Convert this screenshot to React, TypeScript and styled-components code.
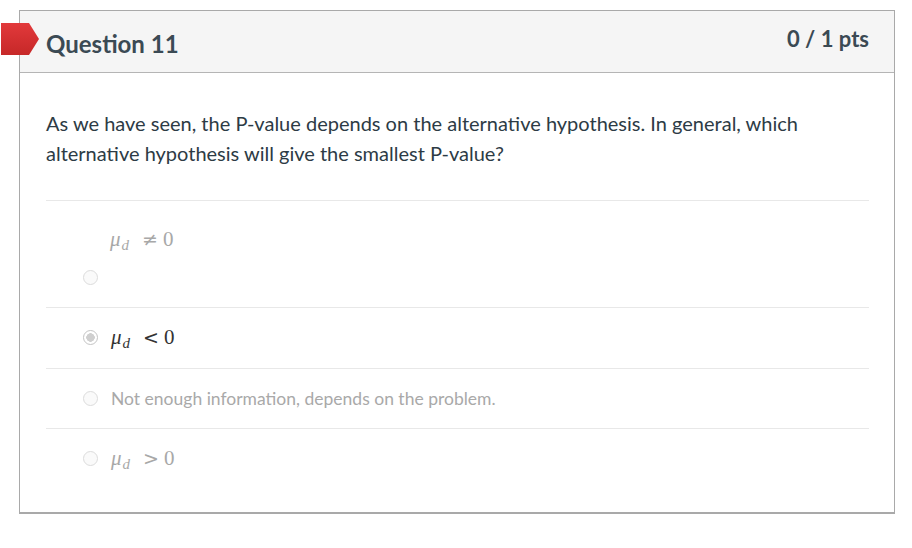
import React from "react";
import styled, { createGlobalStyle } from "styled-components";

const Global = createGlobalStyle`
  html, body { margin: 0; padding: 0; background: #fff; }
  body { font-family: Lato, "Noto Sans", sans-serif; color: #2d3b45; }
`;

const Page = styled.div`
  padding: 10px 17px 0 19px;
`;

const Card = styled.div`
  position: relative;
  border: 1px solid #a9a9a9;
  border-bottom-width: 2px;
  background: #fff;
  height: 504px;
  box-sizing: border-box;
`;

const Flag = styled.div`
  position: absolute;
  left: -19px;
  top: 12px;
  width: 38px;
  height: 32px;
  background: linear-gradient(#e2393b, #c62828);
  clip-path: polygon(0 0, 28px 0, 38px 50%, 28px 100%, 0 100%);
`;

const Header = styled.div`
  display: flex;
  justify-content: space-between;
  align-items: flex-start;
  height: 62px;
  box-sizing: border-box;
  background: #f5f5f5;
  border-bottom: 1px solid #b5b5b5;
  padding: 16px 25px 0 26px;
`;

const Title = styled.h2`
  margin: 0;
  font-family: Lato, sans-serif;
  font-weight: 700;
  font-size: 24px;
  line-height: 34px;
  color: #3b4a54;
`;

const Points = styled.div`
  font-family: Lato, sans-serif;
  font-weight: 700;
  font-size: 22px;
  line-height: 24px;
  color: #3b4a54;
  margin-top: 0;
`;

const Body = styled.div`
  padding: 35px 25px 0 26px;
`;

const Question = styled.p`
  margin: 0 0 32px;
  font-size: 20px;
  line-height: 30px;
  color: #2d3b45;
`;

const Answer = styled.div<{ $stacked?: boolean }>`
  border-top: 1px solid #e8e8e8;
  display: flex;
  flex-direction: ${(p) => (p.$stacked ? "column" : "row")};
  align-items: ${(p) => (p.$stacked ? "flex-start" : "center")};
  gap: ${(p) => (p.$stacked ? "17px" : "13px")};
  padding: ${(p) => (p.$stacked ? "26px 0 22px 37px" : "0 0 0 37px")};
  height: ${(p) => (p.$stacked ? "auto" : "60.5px")};
  box-sizing: border-box;
`;

const Radio = styled.span<{ $checked?: boolean }>`
  width: 15px;
  height: 15px;
  flex: none;
  border-radius: 50%;
  box-sizing: border-box;
  border: 1px solid ${(p) => (p.$checked ? "#c4c4c4" : "#dcdcdc")};
  background: ${(p) =>
    p.$checked ? "radial-gradient(circle, #cfcfcf 0 4px, #fff 4.5px)" : "#fafafa"};
`;

const Math = styled.span<{ $dark?: boolean; $indent?: boolean }>`
  font-family: "Liberation Serif", "DejaVu Serif", serif;
  font-size: 21px;
  line-height: 24px;
  color: ${(p) => (p.$dark ? "#333" : "#a8a8a8")};
  margin-left: ${(p) => (p.$indent ? "27px" : "0")};
  white-space: nowrap;
`;

const Var = styled.i`
  font-style: italic;
`;

const Sub = styled.i`
  font-style: italic;
  font-size: 15px;
  position: relative;
  top: 4px;
  margin-left: 1px;
`;

const Op = styled.span`
  font-family: "DejaVu Serif", serif;
  font-size: 19px;
  margin: 0 5px 0 13px;
`;

const Label = styled.span`
  font-family: Lato, sans-serif;
  font-size: 17.5px;
  color: #a9a9a9;
`;

const Expr = ({ op, dark, indent }: { op: string; dark?: boolean; indent?: boolean }) => (
  <Math $dark={dark} $indent={indent}>
    <Var>μ</Var>
    <Sub>d</Sub>
    <Op>{op}</Op>0
  </Math>
);

export default function App() {
  return (
    <>
      <Global />
      <Page>
        <Card>
          <Flag />
          <Header>
            <Title>Question 11</Title>
            <Points>0 / 1 pts</Points>
          </Header>
          <Body>
            <Question>
              As we have seen, the P-value depends on the alternative hypothesis. In general, which
              alternative hypothesis will give the smallest P-value?
            </Question>
            <Answer $stacked>
              <Expr op="≠" indent />
              <Radio />
            </Answer>
            <Answer>
              <Radio $checked />
              <Expr op="<" dark />
            </Answer>
            <Answer>
              <Radio />
              <Label>Not enough information, depends on the problem.</Label>
            </Answer>
            <Answer>
              <Radio />
              <Expr op=">" />
            </Answer>
          </Body>
        </Card>
      </Page>
    </>
  );
}
